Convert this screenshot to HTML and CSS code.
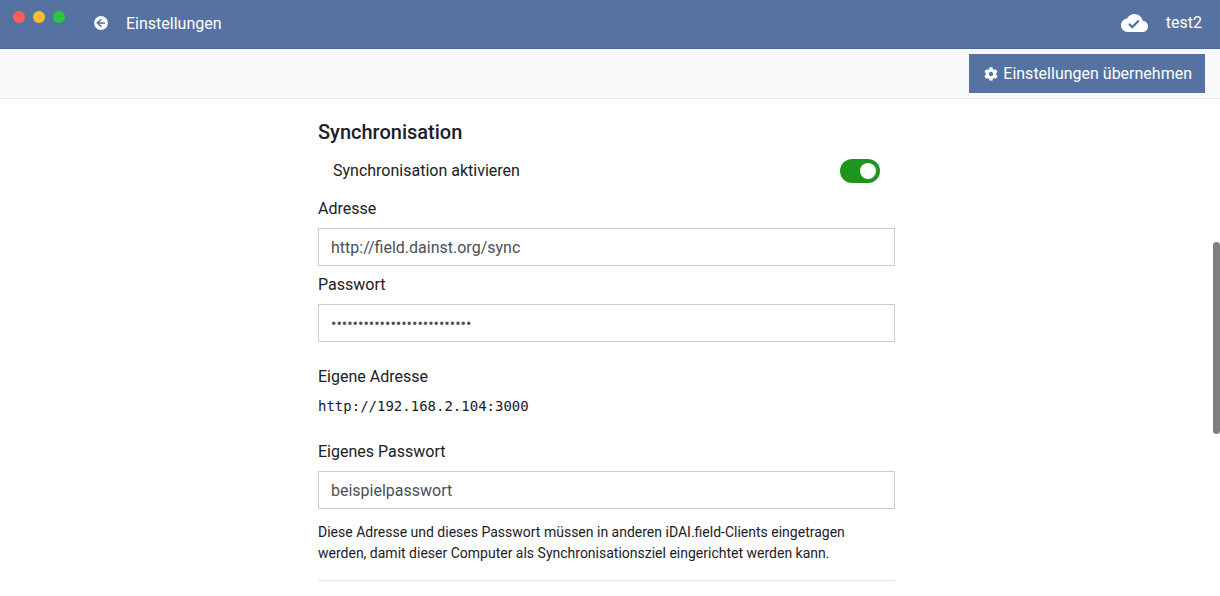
FILE: index.html
```html
<!DOCTYPE html>
<html lang="de">
<head>
<meta charset="utf-8">
<title>Einstellungen</title>
<link rel="stylesheet" href="styles.css">
</head>
<body>
<header class="navbar">
  <div class="window-controls">
    <button class="dot dot-close" aria-label="Schließen"></button>
    <button class="dot dot-minimize" aria-label="Minimieren"></button>
    <button class="dot dot-maximize" aria-label="Maximieren"></button>
  </div>
  <button class="back" aria-label="Zurück">
    <svg width="14" height="14" viewBox="0 0 14 14"><circle cx="7" cy="7" r="6.9" fill="#fff"/><path d="M7.200 3.200 3.400 7l3.800 3.800M3.600 7h7.400" fill="none" stroke="#5572a1" stroke-width="1.6"/></svg>
  </button>
  <span class="nav-title">Einstellungen</span>
  <svg class="cloud" width="27" height="18" viewBox="0 4 24 16"><path fill="#fff" fill-rule="evenodd" d="M19.350 10.040C18.670 6.590 15.640 4 12 4 9.110 4 6.600 5.640 5.350 8.040 2.340 8.360 0 10.910 0 14c0 3.310 2.690 6 6 6h13c2.760 0 5-2.240 5-5 0-2.640-2.050-4.780-4.650-4.960zM10 17l-3.500-3.500 1.410-1.410L10 14.170 15.180 9l1.410 1.410L10 17z"/></svg>
  <span class="project">test2</span>
</header>
<div class="toolbar">
  <button class="apply">
    <svg width="14" height="14" viewBox="0 0 512 512"><path fill="#fff" d="M487.400 315.700l-42.600-24.600c4.300-23.200 4.300-47 0-70.200l42.600-24.600c4.900-2.800 7.100-8.600 5.500-14-11.100-35.600-30-67.800-54.700-94.600-3.800-4.100-10-5.100-14.800-2.300L380.800 110c-17.900-15.400-38.500-27.300-60.800-35.100V25.800c0-5.600-3.900-10.500-9.400-11.700-36.700-8.200-74.300-7.800-109.200 0-5.500 1.200-9.400 6.100-9.400 11.700V75c-22.200 7.900-42.800 19.800-60.800 35.100L88.700 85.500c-4.900-2.800-11-1.900-14.800 2.300-24.700 26.700-43.600 58.900-54.700 94.600-1.700 5.400.6 11.200 5.500 14L67.300 221c-4.300 23.200-4.300 47 0 70.200l-42.600 24.600c-4.900 2.800-7.100 8.600-5.500 14 11.100 35.600 30 67.800 54.700 94.600 3.800 4.100 10 5.100 14.800 2.300l42.600-24.600c17.900 15.400 38.500 27.300 60.800 35.100v49.200c0 5.600 3.900 10.500 9.400 11.700 36.700 8.200 74.300 7.800 109.200 0 5.500-1.200 9.400-6.100 9.400-11.700v-49.200c22.200-7.900 42.800-19.800 60.800-35.100l42.600 24.600c4.900 2.800 11 1.900 14.800-2.300 24.700-26.700 43.600-58.900 54.700-94.600 1.500-5.500-.7-11.300-5.600-14.100zM256 336c-44.100 0-80-35.900-80-80s35.900-80 80-80 80 35.900 80 80-35.900 80-80 80z"/></svg>
    <span>Einstellungen übernehmen</span>
  </button>
</div>
<main class="scroll-area">
  <form class="settings">
    <h2 class="heading">Synchronisation</h2>
    <div class="switch-row">
      <label for="sync">Synchronisation aktivieren</label>
      <input class="switch" id="sync" type="checkbox" role="switch" checked>
    </div>
    <div class="field">
      <label for="address">Adresse</label>
      <input class="control" id="address" type="text" value="http://field.dainst.org/sync">
    </div>
    <div class="field">
      <label for="password">Passwort</label>
      <input class="control" id="password" type="password" value="abcdefghijklmnopqrstuvwxyz">
    </div>
    <div class="own-address">
      <div>Eigene Adresse</div>
      <code class="url">http://192.168.2.104:3000</code>
    </div>
    <div class="field">
      <label for="own-password">Eigenes Passwort</label>
      <input class="control" id="own-password" type="text" value="beispielpasswort">
    </div>
    <p class="hint">Diese Adresse und dieses Passwort müssen in anderen iDAI.field-Clients eingetragen werden, damit dieser Computer als Synchronisationsziel eingerichtet werden kann.</p>
    <hr class="divider">
  </form>
  <div class="track"><div class="thumb"></div></div>
</main>
</body>
</html>
```
FILE: styles.css
```css
* { box-sizing: border-box; }

body {
  margin: 0;
  height: 100vh;
  display: flex;
  flex-direction: column;
  overflow: hidden;
  background: #fff;
  color: #1b2026;
  font: 16px/24px Roboto, "Liberation Sans", sans-serif;
}

button {
  border: 0;
  padding: 0;
  background: none;
  color: inherit;
  font: inherit;
}

svg { display: block; flex: none; }

.navbar {
  display: flex;
  align-items: center;
  flex: none;
  padding: 10px 18px 12px 13px;
  border-bottom: 1px solid #486597;
  background: #5572a1;
  color: #fff;
}

.window-controls {
  display: flex;
  align-self: flex-start;
  gap: 8px;
  padding-top: 1px;
}

.dot {
  width: 12px;
  height: 12px;
  border-radius: 50%;
}

.dot-close { background: #ff5f57; }
.dot-minimize { background: #febc2e; }
.dot-maximize { background: #28c840; }
.back { margin-left: 29px; }
.nav-title { margin-left: 18px; padding-top: 2px; }
.cloud { margin-left: auto; }
.project { margin-left: 18px; }

.toolbar {
  display: flex;
  justify-content: flex-end;
  flex: none;
  padding: 5px 15px;
  border-bottom: 1px solid #e3e6ea;
  background: #f8f9fb;
}

.apply {
  display: flex;
  align-items: center;
  gap: 5px;
  padding: 7px 13px 7px 15px;
  background: #5572a1;
  color: #fff;
}

.apply span { padding-top: 1px; }

.scroll-area {
  flex: 1;
  min-height: 0;
  display: flex;
  overflow: hidden;
}

.settings {
  width: 577px;
  max-width: 100%;
  margin: 0 auto;
  padding-top: 21px;
}

.heading {
  margin: 0;
  font-size: 20px;
  line-height: 24px;
  font-weight: 500;
}

.switch-row {
  display: flex;
  align-items: center;
  justify-content: space-between;
  margin: 15px 15px 14px;
}

.switch {
  appearance: none;
  width: 40px;
  height: 24px;
  margin: 0;
  padding: 4px;
  border-radius: 12px;
  background: #1e961e;
  display: flex;
  justify-content: flex-start;
}

.switch::before {
  content: "";
  width: 16px;
  height: 16px;
  border-radius: 50%;
  background: #fff;
}

.switch:checked { justify-content: flex-end; }

.field {
  display: flex;
  flex-direction: column;
  gap: 7px;
  margin-bottom: 7px;
}

.control {
  width: 100%;
  height: 38px;
  padding: 6px 12px;
  border: 1px solid #c6ced5;
  border-radius: 0;
  background: #fff;
  color: #495057;
  font: inherit;
}

.own-address {
  display: flex;
  flex-direction: column;
  gap: 5px;
  margin: 23px 0 22px;
}

.url {
  font: 14px/24px "DejaVu Sans Mono", monospace;
}

.hint {
  margin: 13px 0 16px;
  font-size: 14px;
  line-height: 21px;
}

.divider {
  margin: 0;
  border: 0;
  border-top: 1px solid #e1e3e5;
}

.track {
  width: 7px;
  flex: none;
  padding-top: 143px;
}

.thumb {
  height: 192px;
  border-radius: 4px;
  background: #7f7f7f;
}
```
